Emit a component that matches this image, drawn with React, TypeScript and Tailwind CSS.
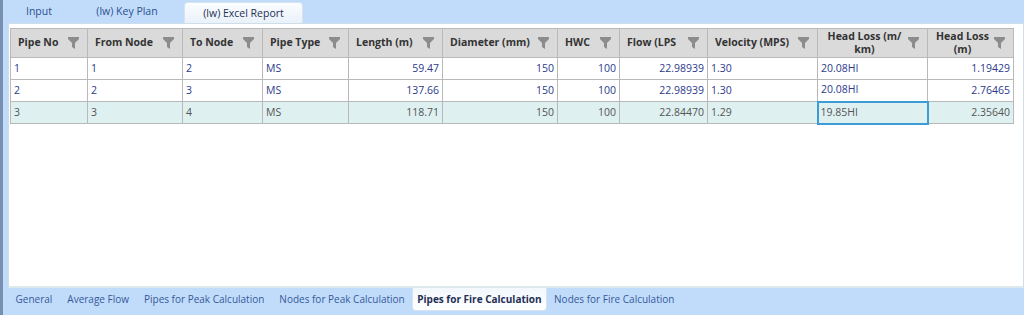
import React from "react";

const font = { fontFamily: '"Open Sans", "Noto Sans", sans-serif' };

interface Col {
  label: string;
  w: number;
  align: "left" | "right";
  center?: boolean;
}

const cols: Col[] = [
  { label: "Pipe No", w: 77, align: "left" },
  { label: "From Node", w: 95, align: "left" },
  { label: "To Node", w: 80, align: "left" },
  { label: "Pipe Type", w: 86, align: "left" },
  { label: "Length (m)", w: 94, align: "right" },
  { label: "Diameter (mm)", w: 115, align: "right" },
  { label: "HWC", w: 62, align: "right" },
  { label: "Flow (LPS", w: 88, align: "right" },
  { label: "Velocity (MPS)", w: 110, align: "left" },
  { label: "Head Loss (m/ km)", w: 110, align: "left", center: true },
  { label: "Head Loss (m)", w: 86, align: "right", center: true },
];

const rows = [
  ["1", "1", "2", "MS", "59.47", "150", "100", "22.98939", "1.30", "20.08HI", "1.19429"],
  ["2", "2", "3", "MS", "137.66", "150", "100", "22.98939", "1.30", "20.08HI", "2.76465"],
  ["3", "3", "4", "MS", "118.71", "150", "100", "22.84470", "1.29", "19.85HI", "2.35640"],
];

const bottomTabs = [
  "General",
  "Average Flow",
  "Pipes for Peak Calculation",
  "Nodes for Peak Calculation",
  "Pipes for Fire Calculation",
  "Nodes for Fire Calculation",
];

function Funnel() {
  return (
    <svg width="11" height="12" viewBox="0 0 11 12" className="shrink-0">
      <path d="M0 0 H11 V2 L7 6 V12 L4 10 V6 L0 2 Z" fill="#8c8c8c" />
    </svg>
  );
}

export default function App() {
  return (
    <div
      className="w-[1024px] h-[315px] bg-[#c1dcfb] border-l-[3px] border-[#7890b0] flex flex-col overflow-hidden"
      style={font}
    >
      {/* top tabs */}
      <div className="h-[23px] flex items-end pl-[5px] text-[10.5px] text-[#2d4f8e] shrink-0">
        <div className="w-[62px] text-center pb-[3px]">Input</div>
        <div className="w-[114px] text-center pb-[3px]">(lw) Key Plan</div>
        <div className="w-[119px] h-[21px] rounded-t-[4px] border border-b-0 border-[#d7e4f0] bg-gradient-to-b from-[#fbfdff] to-[#e9f1f9] text-center leading-[20px] text-[#1f2f55]">
          (lw) Excel Report
        </div>
      </div>

      {/* content */}
      <div className="flex-1 ml-[5px] bg-white border border-[#cfdde8] border-b-[2px] border-b-[#dbe9ec] pt-[4px] pl-px">
        <table className="border-collapse table-fixed text-[10.5px]" style={{ width: 1003 }}>
          <colgroup>
            {cols.map((c) => (
              <col key={c.label} style={{ width: c.w }} />
            ))}
          </colgroup>
          <thead>
            <tr className="h-[29px] bg-[#dadada]">
              {cols.map((c) => (
                <th key={c.label} className="border border-[#b9b9b9] pl-[7px] pr-[8px] py-0 font-bold text-[#333]">
                  <div className="flex items-center justify-between gap-1">
                    <span className={c.center ? "flex-1 text-center leading-[13px]" : "whitespace-nowrap"}>
                      {c.label}
                    </span>
                    <Funnel />
                  </div>
                </th>
              ))}
            </tr>
          </thead>
          <tbody>
            {rows.map((r, i) => {
              const last = i === rows.length - 1;
              return (
                <tr key={i} className={last ? "h-[22px] bg-[#dff0f1] text-[#555]" : "h-[22px] bg-white text-[#2c3a8c]"}>
                  {r.map((v, j) => {
                    const sel = last && j === 9;
                    return (
                      <td
                        key={j}
                        className={
                          (cols[j].align === "right" ? "text-right " : "text-left ") +
                          (sel
                            ? "border-2 border-[#3d9bd6] px-[2px] "
                            : "border border-[#b9b9b9] px-[3px] ") +
                          "py-0 whitespace-nowrap"
                        }
                      >
                        {v}
                      </td>
                    );
                  })}
                </tr>
              );
            })}
          </tbody>
        </table>
      </div>

      {/* bottom tabs */}
      <div className="h-[27px] flex items-start pl-[5px] text-[10px] text-[#37599a] shrink-0">
        {bottomTabs.map((t) => {
          const active = t === "Pipes for Fire Calculation";
          return active ? (
            <div
              key={t}
              className="h-[23px] px-[4px] rounded-b-[4px] border border-t-0 border-[#d7e4f0] bg-gradient-to-b from-[#f3f8fd] to-[#ffffff] font-bold text-[#1f2f55] leading-[22px]"
            >
              {t}
            </div>
          ) : (
            <div key={t} className="px-[7.5px] leading-[22px]">
              {t}
            </div>
          );
        })}
      </div>
    </div>
  );
}
